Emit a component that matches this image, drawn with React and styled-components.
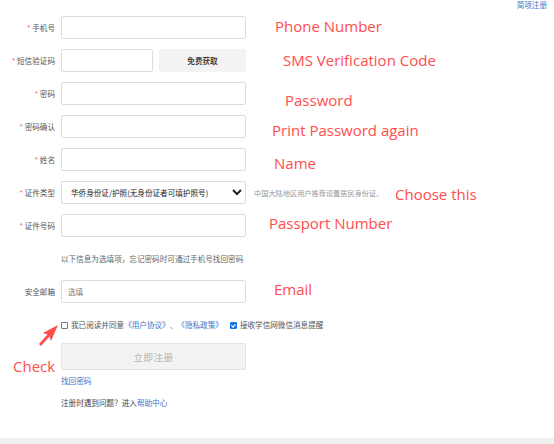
import React from 'react'
import styled, {createGlobalStyle} from 'styled-components'

const GlobalStyle = createGlobalStyle`
    body {
        margin: 0;
        background: #fff;
        font-family: "Noto Sans CJK SC", "Noto Sans", sans-serif;
        color: #333;
    }
`;

const notes = [
    {text: "Phone Number", left: 275, top: 16},
    {text: "SMS Verification Code", left: 283, top: 50},
    {text: "Password", left: 285, top: 90},
    {text: "Print Password again", left: 272, top: 120},
    {text: "Name", left: 274, top: 153},
    {text: "Choose this", left: 395, top: 184},
    {text: "Passport Number", left: 269, top: 213},
    {text: "Email", left: 274, top: 279},
    {text: "Check", left: 13, top: 356},
]

export default function App() {
  return (
    <Page>
        <GlobalStyle />
        <TopLink>简项注册</TopLink>
        <Form>
            <Row>
                <Label required>手机号</Label>
                <Input />
            </Row>
            <Row>
                <Label required>短信验证码</Label>
                <SmsLine>
                    <Input />
                    <CodeButton>免费获取</CodeButton>
                </SmsLine>
            </Row>
            <Row>
                <Label required>密码</Label>
                <Input type="password" />
            </Row>
            <Row>
                <Label required>密码确认</Label>
                <Input type="password" />
            </Row>
            <Row>
                <Label required>姓名</Label>
                <Input />
            </Row>
            <Row>
                <Label required>证件类型</Label>
                <SelectLine>
                    <Select defaultValue="hq">
                        <option value="hq">华侨身份证/护照(无身份证者可填护照号)</option>
                        <option value="id">居民身份证</option>
                    </Select>
                    <Tip>中国大陆地区用户推荐设置居民身份证。</Tip>
                </SelectLine>
            </Row>
            <Row gap={17}>
                <Label required>证件号码</Label>
                <Input />
            </Row>
            <Row gap={16}>
                <span />
                <Hint>以下信息为选填项，忘记密码时可通过手机号找回密码</Hint>
            </Row>
            <Row gap={17}>
                <Label>安全邮箱</Label>
                <Input placeholder="选填" />
            </Row>
            <Row gap={13}>
                <span />
                <Agree>
                    <Box />
                    <span>我已阅读并同意</span>
                    <Link>《用户协议》</Link>
                    <span>、</span>
                    <Link>《隐私政策》</Link>
                    <Box checked />
                    <span>接收学信网微信消息提醒</span>
                </Agree>
            </Row>
            <Row gap={6}>
                <span />
                <Submit disabled>立即注册</Submit>
            </Row>
            <Row gap={12}>
                <span />
                <Link>找回密码</Link>
            </Row>
            <Row>
                <span />
                <Help>注册时遇到问题？进入<Link>帮助中心</Link></Help>
            </Row>
        </Form>
        {notes.map((n) => (
            <Note key={n.text} style={{left: n.left, top: n.top}}>{n.text}</Note>
        ))}
        <Arrow width="22" height="24" viewBox="0 0 22 24">
            <polygon points="20,1 13,17 11.5,12.5 3,22 1,20 9.5,10.5 5,9" fill="#ff4d4d" />
        </Arrow>
        <Footer />
    </Page>
  )
}

const Page = styled.div`
    position: relative;
    width: 554px;
    height: 444px;
    overflow: hidden;
    display: flex;
    flex-direction: column;
`;
const TopLink = styled.a`
    position: absolute;
    top: 0px;
    right: 7px;
    font-size: 7.6px;
    color: #3a74c9;
    line-height: 10px;
`;
const Form = styled.div`
    padding-top: 16px;
    flex: 1;
    display: flex;
    flex-direction: column;
`;
const Row = styled.div`
    display: grid;
    grid-template-columns: 55px 185px;
    column-gap: 6px;
    align-items: center;
    margin-bottom: ${p => p.gap ?? 10}px;
`;
const Label = styled.label`
    text-align: right;
    font-size: 7.6px;
    color: #555;
    white-space: nowrap;
    &::before {
        content: ${p => p.required ? '"* "' : '""'};
        color: #f06060;
    }
`;
const Input = styled.input`
    box-sizing: border-box;
    width: 100%;
    height: 23px;
    border: 1px solid #dcdcdc;
    border-radius: 2px;
    padding: 0 6px;
    font-size: 7.6px;
    font-family: inherit;
    outline: none;
    &::placeholder {
        color: #777;
    }
`;
const SmsLine = styled.div`
    display: grid;
    grid-template-columns: 92px 87px;
    column-gap: 6px;
`;
const CodeButton = styled.button`
    height: 23px;
    border: none;
    border-radius: 2px;
    background: #f3f3f3;
    font-size: 7.6px;
    font-family: inherit;
    font-weight: 500;
    color: #222;
`;
const SelectLine = styled.div`
    display: flex;
    align-items: center;
    gap: 8px;
    width: 400px;
`;
const Select = styled.select`
    box-sizing: border-box;
    width: 185px;
    flex: none;
    height: 23px;
    border: 1px solid #dcdcdc;
    border-radius: 2px;
    background: #fff;
    padding: 0 3px 0 5px;
    font-size: 7.6px;
    font-family: inherit;
    color: #222;
`;
const Tip = styled.span`
    font-size: 7.2px;
    color: #999;
    white-space: nowrap;
`;
const Hint = styled.div`
    font-size: 7.6px;
    color: #666;
    white-space: nowrap;
    line-height: 10px;
`;
const Agree = styled.div`
    display: flex;
    align-items: center;
    font-size: 7.6px;
    color: #555;
    white-space: nowrap;
    line-height: 10px;
    & > a:nth-of-type(2) {
        margin-right: 7px;
    }
`;
const Box = styled.span`
    box-sizing: border-box;
    flex: none;
    width: 7px;
    height: 7px;
    margin-right: 3px;
    border: 1px solid ${p => p.checked ? '#1a73e8' : '#777'};
    border-radius: 1px;
    background: ${p => p.checked ? '#1a73e8' : '#fff'};
    position: relative;
    &::after {
        content: "";
        display: ${p => p.checked ? 'block' : 'none'};
        position: absolute;
        left: 1.5px;
        top: 0px;
        width: 1.5px;
        height: 3px;
        border: solid #fff;
        border-width: 0 1px 1px 0;
        transform: rotate(45deg);
    }
`;
const Link = styled.a`
    color: #3a74c9;
    font-size: 7.6px;
    line-height: 10px;
`;
const Submit = styled.button`
    height: 27px;
    border: 1px solid #e3e3e3;
    border-radius: 2px;
    background: #f3f3f3;
    color: #b5b5b5;
    font-size: 9.5px;
    font-family: inherit;
    letter-spacing: 0.5px;
`;
const Help = styled.div`
    font-size: 7.6px;
    color: #444;
    line-height: 10px;
    white-space: nowrap;
`;
const Note = styled.div`
    position: absolute;
    font-family: "Open Sans", "Noto Sans", sans-serif;
    font-size: 15px;
    line-height: 20px;
    color: #ff4d4d;
    white-space: nowrap;
`;
const Arrow = styled.svg`
    position: absolute;
    left: 38px;
    top: 324px;
`;
const Footer = styled.div`
    height: 6px;
    background: #f1f1f1;
    flex: none;
`;
